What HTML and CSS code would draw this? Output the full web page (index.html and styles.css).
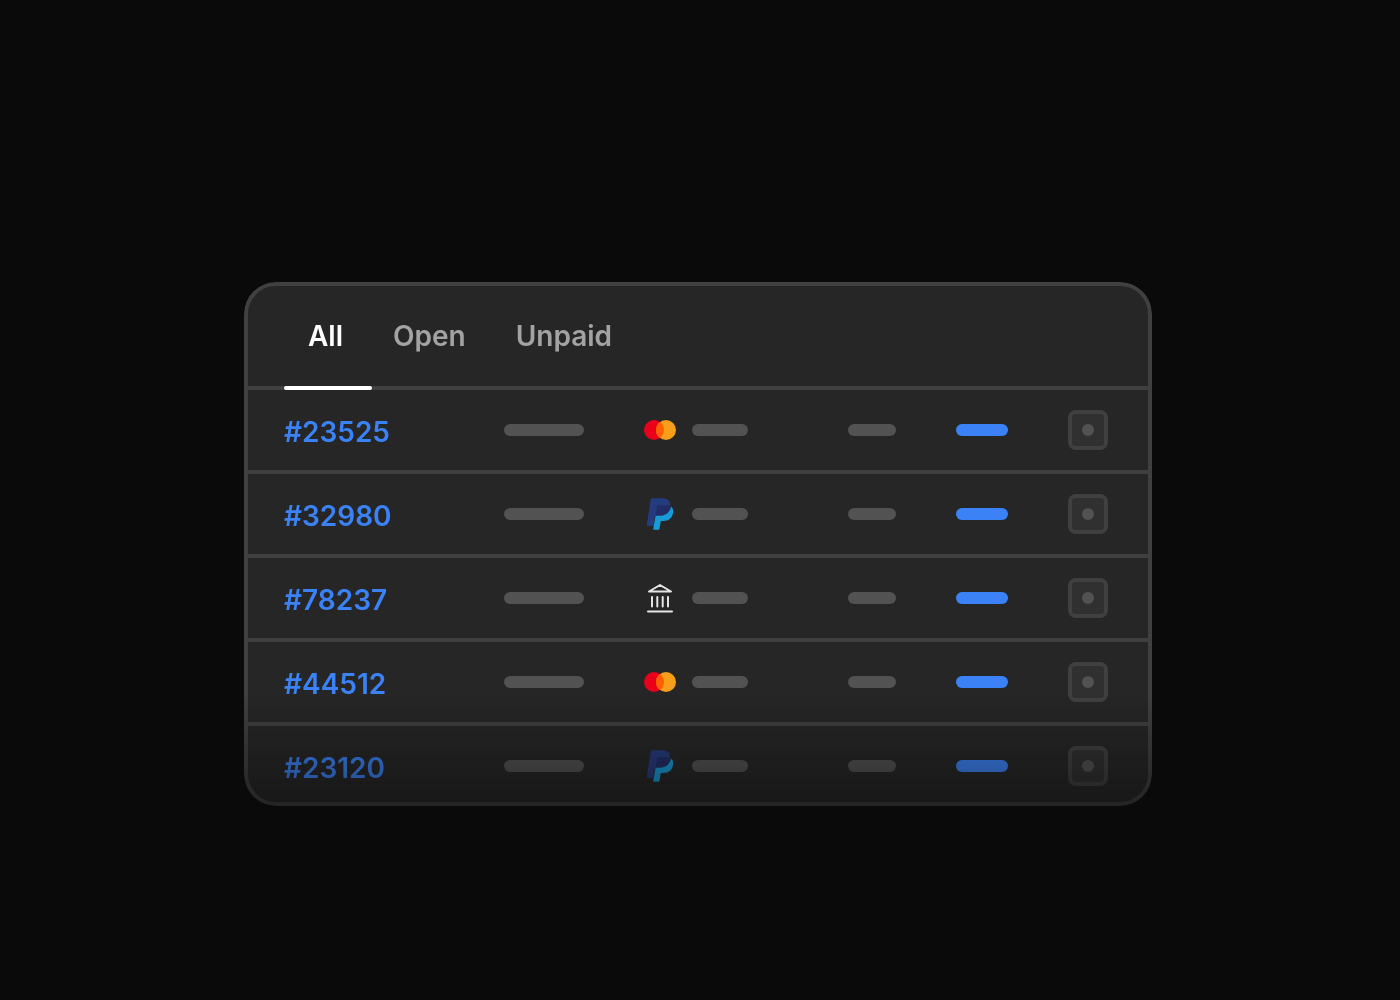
FILE: index.html
```html
<!DOCTYPE html>
<html lang="en">
<head>
<meta charset="utf-8">
<meta name="viewport" content="width=device-width, initial-scale=1">
<title>Orders</title>
<link rel="stylesheet" href="styles.css">
</head>
<body>
<svg class="sprite" aria-hidden="true">
  <symbol id="mastercard" viewBox="0 0 32 32">
    <circle cx="10" cy="16" r="10" fill="#eb001b"/>
    <circle cx="22" cy="16" r="10" fill="#f79e1b"/>
    <path d="M16 8a10 10 0 0 1 0 16a10 10 0 0 1 0-16z" fill="#ff5f00"/>
  </symbol>
  <symbol id="paypal" viewBox="0 0 32 32">
    <path d="M8 .3H18c6.200 0 8.900 3.200 8 8.700C24.900 15 20.800 17.800 14.500 17.800h-2.300c-.8 0-1.400.4-1.500 1.300L9.200 28H3.600c-.6 0-.9-.4-.8-.9L6.700 1.400C6.800.7 7.300.3 8 .3z" fill="#253b80"/>
    <path d="M27 8.500c2 1.500 2.500 4 2 6.800-1 5.200-4.600 7.700-9.800 7.700h-1.500c-.6 0-1 .4-1.100 1l-1.100 7c-.1.500-.4.800-.9.800H9.800c-.5 0-.7-.3-.6-.8l2.200-12.300c.1-.7.600-1.100 1.300-1.100h2.800C21.400 17.600 25.500 14.600 27 8.500z" fill="#179bd7"/>
    <path d="M14.200 7.200h9.400c1.400 0 2.500.3 3.400 1.300-1.500 6.100-5.600 9.100-11.500 9.100h-2.600c-.7 0-1.200.3-1.300 1L13 8.400c.1-.7.500-1.200 1.200-1.200z" fill="#222d65"/>
  </symbol>
  <symbol id="bank" viewBox="0 0 32 32">
    <g fill="none" stroke="#e5e5e5" stroke-width="2" stroke-linecap="round" stroke-linejoin="round">
      <path d="M5 9.500L16 3l11 6.500z"/>
      <path d="M4 29.500h24"/>
      <path d="M8 15v9.500M13.300 15v9.500M18.700 15v9.500M24 15v9.500"/>
    </g>
  </symbol>
</svg>
<main class="card">
  <nav class="tabs" aria-label="Order filters">
    <button class="tab tab-active" type="button">All</button>
    <button class="tab" type="button">Open</button>
    <button class="tab" type="button">Unpaid</button>
  </nav>
  <table class="orders">
    <colgroup>
      <col class="col-id"><col class="col-name"><col class="col-method"><col class="col-amount"><col class="col-status"><col class="col-action">
    </colgroup>
    <tbody>
      <tr>
        <td class="id"><a href="#23525">#23525</a></td>
        <td><span class="bar bar-xl"></span></td>
        <td><span class="method"><svg class="logo"><use href="#mastercard"/></svg><span class="bar bar-lg"></span></span></td>
        <td><span class="bar bar-sm"></span></td>
        <td><span class="bar bar-status"></span></td>
        <td><button class="more" type="button" aria-label="Actions for order 23525"></button></td>
      </tr>
      <tr>
        <td class="id"><a href="#32980">#32980</a></td>
        <td><span class="bar bar-xl"></span></td>
        <td><span class="method"><svg class="logo"><use href="#paypal"/></svg><span class="bar bar-lg"></span></span></td>
        <td><span class="bar bar-sm"></span></td>
        <td><span class="bar bar-status"></span></td>
        <td><button class="more" type="button" aria-label="Actions for order 32980"></button></td>
      </tr>
      <tr>
        <td class="id"><a href="#78237">#78237</a></td>
        <td><span class="bar bar-xl"></span></td>
        <td><span class="method"><svg class="logo"><use href="#bank"/></svg><span class="bar bar-lg"></span></span></td>
        <td><span class="bar bar-sm"></span></td>
        <td><span class="bar bar-status"></span></td>
        <td><button class="more" type="button" aria-label="Actions for order 78237"></button></td>
      </tr>
      <tr>
        <td class="id"><a href="#44512">#44512</a></td>
        <td><span class="bar bar-xl"></span></td>
        <td><span class="method"><svg class="logo"><use href="#mastercard"/></svg><span class="bar bar-lg"></span></span></td>
        <td><span class="bar bar-sm"></span></td>
        <td><span class="bar bar-status"></span></td>
        <td><button class="more" type="button" aria-label="Actions for order 44512"></button></td>
      </tr>
      <tr>
        <td class="id"><a href="#23120">#23120</a></td>
        <td><span class="bar bar-xl"></span></td>
        <td><span class="method"><svg class="logo"><use href="#paypal"/></svg><span class="bar bar-lg"></span></span></td>
        <td><span class="bar bar-sm"></span></td>
        <td><span class="bar bar-status"></span></td>
        <td><button class="more" type="button" aria-label="Actions for order 23120"></button></td>
      </tr>
    </tbody>
  </table>
</main>
</body>
</html>
```

FILE: styles.css
```css
* {
  box-sizing: border-box;
}

body {
  margin: 0;
  min-height: 100vh;
  padding: 88px 4px 0 0;
  display: flex;
  align-items: center;
  justify-content: center;
  background: #0a0a0a;
  font-family: Inter, "Liberation Sans", sans-serif;
  font-size: 28px;
  line-height: 40px;
}

.sprite {
  display: none;
}

.card {
  width: 100%;
  max-width: 908px;
  overflow: hidden;
  background: #262626;
  border: 4px solid #404040;
  border-radius: 32px;
  -webkit-mask-image: linear-gradient(to top, rgba(0, 0, 0, 0.5), #000 112px);
  mask-image: linear-gradient(to top, rgba(0, 0, 0, 0.5), #000 112px);
}

.tabs {
  display: flex;
  gap: 2px;
  padding: 0 36px;
  border-bottom: 4px solid #404040;
}

.tab {
  position: relative;
  height: 100px;
  padding: 0 24px;
  border: 0;
  background: none;
  color: #a3a3a3;
  font: inherit;
  font-weight: 600;
}

.tab-active {
  color: #fff;
}

.tab-active::after {
  content: "";
  position: absolute;
  left: 0;
  bottom: -4px;
  width: 88px;
  height: 4px;
  border-radius: 2px;
  background: #fff;
}

.orders {
  width: 100%;
  table-layout: fixed;
  border-spacing: 0;
}

.col-id { width: 256px; }
.col-name { width: 140px; }
.col-method { width: 204px; }
.col-amount { width: 108px; }
.col-status { width: 112px; }
.col-action { width: 80px; }

.orders td {
  padding: 20px 0;
  border-bottom: 4px solid #404040;
  vertical-align: middle;
}

.orders tr:last-child td {
  padding-bottom: 16px;
  border-bottom: 0;
}

.orders td.id {
  padding-top: 22px;
  padding-bottom: 18px;
  padding-left: 36px;
}

.orders tr:last-child td.id {
  padding-bottom: 14px;
}

.id a {
  display: block;
  color: #3b82f6;
  font-weight: 600;
  text-decoration: none;
}

.method {
  display: flex;
  align-items: center;
  gap: 16px;
}

.logo {
  width: 32px;
  height: 32px;
}

.bar {
  display: block;
  height: 12px;
  border-radius: 6px;
  background: #525252;
}

.bar-xl { width: 80px; }
.bar-lg { width: 56px; }
.bar-sm { width: 48px; }

.bar-status {
  width: 52px;
  background: #3b82f6;
}

.more {
  display: flex;
  align-items: center;
  justify-content: center;
  width: 40px;
  height: 40px;
  padding: 0;
  border: 4px solid #404040;
  border-radius: 8px;
  background: #303030;
}

.more::before {
  content: "";
  width: 12px;
  height: 12px;
  border-radius: 50%;
  background: #525252;
}
```
